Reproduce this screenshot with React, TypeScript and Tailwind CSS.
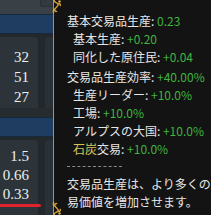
import React from 'react';

const jp = { fontFamily: '"Noto Sans CJK JP", "Noto Sans", sans-serif' };
const serif = { fontFamily: '"Liberation Serif", "DejaVu Serif", serif' };

function Ornament({ flip = false }: { flip?: boolean }) {
  return (
    <svg
      width="12"
      height="14"
      viewBox="0 0 12 14"
      className={flip ? 'absolute left-[-3px] bottom-0 -scale-y-100' : 'absolute left-[-3px] top-0'}
    >
      <path
        d="M3 0 C3 3 6 2 7 4 C8 6 5 7 4 9 C3 11 5 12 6 11 M7 4 C9 3 10 5 9 6 M4 9 C2 9 2 12 3 13"
        fill="none"
        stroke="#d9a23a"
        strokeWidth="1.4"
      />
      <circle cx="8.5" cy="1.5" r="1.2" fill="#e0b04a" />
    </svg>
  );
}

function NumberCard({ values, top, lh, className }: { values: string[]; top: string; lh: string; className: string }) {
  return (
    <div className={`flex gap-[7px] ${className}`}>
      <div className={`w-[38px] rounded-tr-[4px] bg-[#2d3439] ${top} pr-[9px] text-right text-[15px] text-[#eceff0] ${lh}`} style={serif}>
        {values.map((v) => (
          <div key={v}>{v}</div>
        ))}
      </div>
      <div className="flex-1 rounded-tl-[4px] bg-[#2a3136]" />
    </div>
  );
}

function Line({ label, value, indent = false, className = '' }: { label: React.ReactNode; value: string; indent?: boolean; className?: string }) {
  return (
    <div className={`whitespace-nowrap text-[#e6e6e6] ${indent ? 'pl-[6px]' : ''} ${className}`}>
      {label}: <span className="text-[#3fb43f]">{value}</span>
    </div>
  );
}

export default function App() {
  return (
    <div className="flex h-[215px] w-[211px] overflow-hidden bg-[#22282c]">
      {/* left panel */}
      <div className="flex w-[53px] flex-col">
        <div className="flex h-[14px] bg-[#394046]">
          <div className="flex-1" />
          <div className="h-[7px] w-[13px] rounded-bl-[3px] border-b border-l border-[#2a3035] bg-[#333a3f]" />
        </div>
        <div className="h-[20px] border-y border-[#16283c] bg-[#1f3d60]" />
        <div className="h-[3px]" />
        <NumberCard values={['32', '51', '27']} top="pt-[10px]" lh="leading-[20px]" className="h-[71px]" />
        <div className="h-[9px] bg-[#262c30]" />
        <div className="h-[20px] border-y border-[#16283c] bg-[#1f3d60]" />
        <div className="h-[3px]" />
        <div className="relative flex-1">
          <NumberCard values={['1.5', '0.66', '0.33']} top="pt-[7px]" lh="leading-[19px]" className="h-full" />
          <div className="absolute left-0 top-[64px] h-[3px] w-[41px] rounded-r-[2px] bg-[#e0232a]" />
        </div>
      </div>

      {/* tooltip */}
      <div className="relative flex-1 border-l border-[#cf8a2d] bg-[#131313]">
        <Ornament />
        <Ornament flip />
        <div className="overflow-hidden pl-[13px] pt-[12px] text-[12px] leading-[18px]" style={jp}>
          <Line label="基本交易品生産" value="0.23" />
          <Line label="基本生産" value="+0.20" indent />
          <Line label="同化した原住民" value="+0.04" indent />
          <Line label="交易品生産効率" value="+40.00%" className="mt-[2px]" />
          <Line label="生産リーダー" value="+10.0%" indent />
          <Line label="工場" value="+10.0%" indent />
          <Line label="アルプスの大国" value="+10.0%" indent />
          <Line
            label={
              <>
                <span className="text-[#d6c65a]">石炭</span>交易
              </>
            }
            value="+10.0%"
            indent
          />
          <div className="my-[8px] w-[55px] border-t border-dashed border-[#8a8a8a]" />
          <div className="whitespace-nowrap text-[#e6e6e6]">交易品生産は、より多くの</div>
          <div className="whitespace-nowrap text-[#e6e6e6]">易価値を増加させます。</div>
        </div>
      </div>
    </div>
  );
}
